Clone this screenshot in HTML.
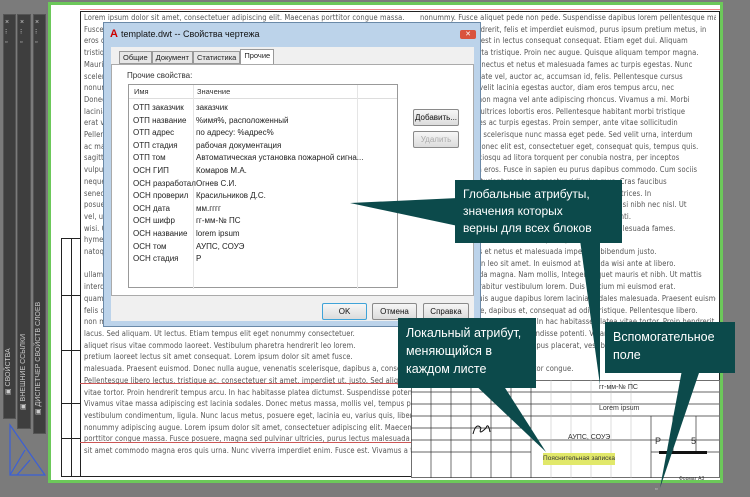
<!DOCTYPE html>
<html><head><meta charset="utf-8"><style>
*{margin:0;padding:0;box-sizing:border-box}
html,body{width:750px;height:497px;overflow:hidden}
body{background:#7b7b7b;position:relative;font-family:"Liberation Sans","DejaVu Sans",sans-serif}
.a{position:absolute}
.strip{position:absolute;top:14px;background:#3e3e3e;border:1px solid #555}
.paper{position:absolute;left:48px;top:2px;width:675px;height:481px;background:#fff;border:3px solid #6cc85a;overflow:hidden}
.txt{position:absolute;font-family:"DejaVu Sans Condensed","Liberation Sans Narrow",sans-serif;font-size:7.5px;color:#555;line-height:11.7px;white-space:nowrap;overflow:hidden;letter-spacing:0.1px;height:446px}
.dlg{position:absolute;left:103px;top:22px;width:378px;height:305px;background:#bcd3ea;border:1px solid #6a89a8}
.inner{position:absolute;left:7px;top:24px;width:363px;height:274px;background:#f0f0f0}
.btn{position:absolute;background:linear-gradient(#f6f6f6,#dcdcdc);border:1px solid #8a8a8a;border-radius:2px;font-size:8px;text-align:center;line-height:15px;color:#111}
.call{position:absolute;background:#0c4a4b;color:#fff;font-size:12.5px;line-height:18px;padding:6px 8px;white-space:nowrap;overflow:hidden}
.row{height:12.6px;font-size:8px;line-height:12.6px;color:#222;white-space:nowrap}
</style></head><body>
<div class="strip" style="left:3px;width:13px;height:405px"></div>
<div class="strip" style="left:17px;width:14px;height:415px"></div>
<div class="strip" style="left:33px;width:13px;height:420px"></div>
<div class="a" style="left:5px;top:18px;color:#ccc;font-size:7px;line-height:10px">×<br>⁝<br>▫</div>
<div class="a" style="left:20px;top:18px;color:#ccc;font-size:7px;line-height:10px">×<br>⁝<br>▫</div>
<div class="a" style="left:35px;top:18px;color:#ccc;font-size:7px;line-height:10px">×<br>⁝<br>▫</div>
<div class="a" style="left:4px;top:395px;transform:rotate(-90deg);transform-origin:0 0;color:#ccc;font-size:7px;white-space:nowrap">▣ СВОЙСТВА</div>
<div class="a" style="left:19px;top:410px;transform:rotate(-90deg);transform-origin:0 0;color:#ccc;font-size:7px;white-space:nowrap">▣ ВНЕШНИЕ ССЫЛКИ</div>
<div class="a" style="left:34px;top:415px;transform:rotate(-90deg);transform-origin:0 0;color:#ccc;font-size:7px;white-space:nowrap">▣ ДИСПЕТЧЕР СВОЙСТВ СЛОЕВ</div>
<svg class="a" style="left:5px;top:420px" width="45" height="60"><path d="M5 5 L5 55 L40 55 Z M5 55 L20 30 M12 55 L25 40" stroke="#3b5fd6" fill="none" stroke-width="1.2"/></svg>

<div class="paper">
<div class="a" style="left:29px;top:6px;width:640px;height:466px;border:1px solid #222"></div>
<div class="a" style="left:29px;top:4px;width:640px;height:1px;background:#e88"></div>
<div class="txt" style="left:33px;top:7px;width:335px">Lorem ipsum dolor sit amet, consectetuer adipiscing elit. Maecenas porttitor congue massa.<br>Fusce posuere, magna sed pulvinar ultricies, purus lectus malesuada libero, sit amet commodo<br>eros quis urna. Nunc viverra imperdiet enim. Fusce est. Vivamus a tellus. Pellentesque habitant<br>tristique senectus et netus et malesuada fames ac turpis egestas. Proin pharetra nonummy pede.<br>Mauris et orci. Aenean nec lorem. In porttitor. Donec laoreet nonummy augue. Suspendisse dui<br>scelerisque at, vulputate vitae, pretium mattis, nunc. Mauris eget neque at sem venenatis<br>nonummy. Fusce aliquet pede non pede. Suspendisse dapibus lorem pellentesque magna.<br>Donec ligula. Donec hendrerit, felis et imperdiet euismod, purus ipsum pretium metus, in<br>lacinia nulla nisl eget sapien. Donec ut est in lectus consequat consequat. Etiam eget dui.<br>erat volutpat. Lorem in nunc porta tristique. Proin nec augue. Quisque aliquam tempor magna.<br>Pellentesque habitant morbi tristique senectus et netus et malesuada fames ac turpis egestas.<br>ac magna. Nunc odio dolor, vulputate vel, auctor ac, accumsan id, felis. Pellentesque cursus<br>sagittis felis. Pellentesque porttitor, velit lacinia egestas auctor, diam eros tempus arcu.<br>vulputate lectus vel risus. Cras non magna vel ante adipiscing rhoncus. Vivamus a mi. Morbi<br>neque. Aliquam erat volutpat. Integer ultrices lobortis eros. Pellentesque habitant morbi<br>senectus et netus et malesuada fames ac turpis egestas. Proin semper, ante vitae sollicitudin<br>posuere, metus quam iaculis nibh, vitae scelerisque nunc massa eget pede. Sed velit urna<br>vel, ultricies tincidunt ut, quam. Donec elit est, consectetuer eget, consequat quis, tempus<br>wisi. Class aptent taciti sociosqu ad litora torquent per conubia nostra, per inceptos<br>hymenaeos. Nulla ullamcorper fringilla eros. Fusce in sapien eu purus dapibus commodo.<br>natoque penatibus et magnis dis parturient montes, nascetur ridiculus mus. Cras faucibus<br><br>ullamcorper at, tellus. Nunc lacus metus, posuere eget, lacinia eu, varius quis, libero.<br>interdum, nisi sem pulvinar neque, at ullamcorper. Etiam ultricies. In ut quam.<br>quam vitae mollis ultrices, libero quam. Curabitur semper nulla lorem ipsum dolor.<br>felis consequat urna, ut imperdiet. Maecenas tincidunt lacinia sodales. Sed et.<br>non mauris. Integer aliquet lorem in porta. Maecenas et orci molestie cursus.<br>lacus. Sed aliquam. Ut lectus. Etiam tempus elit eget nonummy consectetuer.<br>aliquet risus vitae commodo laoreet. Vestibulum pharetra hendrerit leo lorem.<br>pretium laoreet lectus sit amet consequat. Lorem ipsum dolor sit amet fusce.<br>malesuada. Praesent euismod. Donec nulla augue, venenatis scelerisque, dapibus a, consequat at, leo.<br>Pellentesque libero lectus, tristique ac, consectetuer sit amet, imperdiet ut, justo. Sed aliquam odio<br>vitae tortor. Proin hendrerit tempus arcu. In hac habitasse platea dictumst. Suspendisse potenti.<br>Vivamus vitae massa adipiscing est lacinia sodales. Donec metus massa, mollis vel, tempus placerat,<br>vestibulum condimentum, ligula. Nunc lacus metus, posuere eget, lacinia eu, varius quis, libero.<br>nonummy adipiscing augue. Lorem ipsum dolor sit amet, consectetuer adipiscing elit. Maecenas<br>porttitor congue massa. Fusce posuere, magna sed pulvinar ultricies, purus lectus malesuada libero,<br>sit amet commodo magna eros quis urna. Nunc viverra imperdiet enim. Fusce est. Vivamus a tellus.<br>Pellentesque habitant morbi tristique senectus et netus et malesuada fames ac turpis egestas.<br>pharetra nonummy pede. Mauris et orci.<br>&nbsp;&nbsp;&nbsp;&nbsp;&nbsp;&nbsp;Aenean nec lorem. In porttitor. Donec laoreet nonummy augue. Suspendisse dui purus,<br>scelerisque at, vulputate vitae, pretium mattis, nunc. Mauris eget neque at sem venenatis eleifend. Ut</div>
<div class="txt" style="left:369px;top:7px;width:296px;height:370px">nonummy. Fusce aliquet pede non pede. Suspendisse dapibus lorem pellentesque magna. Integer nulla.<br>ligula. Donec hendrerit, felis et imperdiet euismod, purus ipsum pretium metus, in<br>sapien. Donec ut est in lectus consequat consequat. Etiam eget dui. Aliquam<br>lorem in nunc porta tristique. Proin nec augue. Quisque aliquam tempor magna.<br>morbi tristique senectus et netus et malesuada fames ac turpis egestas. Nunc<br>odio dolor, vulputate vel, auctor ac, accumsan id, felis. Pellentesque cursus<br>tesque porttitor, velit lacinia egestas auctor, diam eros tempus arcu, nec<br>e vel risus. Cras non magna vel ante adipiscing rhoncus. Vivamus a mi. Morbi<br>volutpat. Integer ultrices lobortis eros. Pellentesque habitant morbi tristique<br>t malesuada fames ac turpis egestas. Proin semper, ante vitae sollicitudin<br>iaculis nibh, vitae scelerisque nunc massa eget pede. Sed velit urna, interdum<br>cibus ut, quam. Donec elit est, consectetuer eget, consequat quis, tempus quis.<br>s aptent taciti sociosqu ad litora torquent per conubia nostra, per inceptos<br>amcorper fringilla eros. Fusce in sapien eu purus dapibus commodo. Cum sociis<br>et magnis dis parturient montes, nascetur ridiculus mus. Cras faucibus<br>d ultrices. Aliquam et nunc. Etiam ut tellus ullamcorper ultrices. In<br>sque. Nunc lacus metus, posuere eget, lacinia interdum nisi nibh nec nisl. Ut<br>sed ante. Etiam sem. Vivamus a tellus. Pellentesque potenti.<br>dapibus lorem. Vivamus vitae, pretium mattis, nunc et malesuada fames.<br>&nbsp;&nbsp;&nbsp;&nbsp;&nbsp;&nbsp;&nbsp;&nbsp;&nbsp;&nbsp;&nbsp;&nbsp;Vivamus a tellus. Maecenas pede purus.<br>tristique senectus et netus et malesuada imperdiet bibendum justo.<br>mauris. Donec non leo sit amet. In euismod at gravida wisi ante at libero.<br>arcu. Ut malesuada magna. Nam mollis, Integer aliquet mauris et nibh. Ut mattis<br>Nunc sagittis. Curabitur vestibulum lorem. Duis pretium mi euismod erat.<br>non vulputate. Quis augue dapibus lorem lacinia sodales malesuada. Praesent euismod.<br>ntraris scelerisque, dapibus et, consequat ad odio tristique. Pellentesque libero.<br>est. Proin hendrerit tempus arcu. In hac habitasse platea vitae tortor. Proin hendrerit<br>nabitasse platea dictumst. Suspendisse potenti. Vivamus vitae massa adipiscing<br>eget mollis massa mollis vel, tempus placerat, vestibulum condimentum, ligula.<br>libero. Aliquam varius quis libero.<br>r adipiscing elit. Maecenas porttitor congue.<br>us lectus malesuada libero.</div>
<!-- left stamp strips -->
<div class="a" style="left:10px;top:233px;width:20px;height:239px;border:1px solid #222;border-right:none"></div>
<div class="a" style="left:10px;top:290px;width:20px;height:1px;background:#222"></div>
<div class="a" style="left:10px;top:345px;width:20px;height:1px;background:#222"></div>
<div class="a" style="left:10px;top:398px;width:20px;height:1px;background:#222"></div>
<div class="a" style="left:10px;top:433px;width:20px;height:1px;background:#222"></div>
<div class="a" style="left:20px;top:233px;width:1px;height:239px;background:#222"></div>
<!-- title block -->
<div class="a" style="left:29px;top:378px;width:640px;height:1px;background:#c55"></div>
<div class="a" style="left:29px;top:437px;width:640px;height:1px;background:#c55"></div>
<svg class="a" style="left:360px;top:375px" width="310" height="100">
<rect x="0" y="0" width="310" height="100" fill="#fff"/>
<g stroke="#333" stroke-width="0.7" fill="none">
<rect x="0.5" y="0.5" width="308" height="97"/>
<line x1="0" y1="12" x2="308" y2="12"/><line x1="0" y1="24" x2="308" y2="24"/><line x1="0" y1="36" x2="308" y2="36"/>
<line x1="0" y1="48" x2="120" y2="48"/><line x1="0" y1="60" x2="308" y2="60"/><line x1="0" y1="72" x2="120" y2="72"/>
<line x1="120" y1="0" x2="120" y2="98"/><line x1="240" y1="36" x2="240" y2="98"/><line x1="240" y1="72" x2="308" y2="72"/>
<line x1="20" y1="0" x2="20" y2="98"/><line x1="40" y1="0" x2="40" y2="98"/><line x1="60" y1="0" x2="60" y2="98"/><line x1="80" y1="0" x2="80" y2="98"/><line x1="100" y1="0" x2="100" y2="98"/>
<line x1="262" y1="36" x2="262" y2="72"/><line x1="285" y1="36" x2="285" y2="72"/>
</g>
<g stroke="#bbb" stroke-width="0.5"><line x1="140" y1="0" x2="140" y2="98"/><line x1="160" y1="0" x2="160" y2="98"/><line x1="180" y1="0" x2="180" y2="98"/><line x1="200" y1="0" x2="200" y2="98"/><line x1="220" y1="0" x2="220" y2="98"/></g>
<path d="M62 54 q3 -12 8 -6 q-3 8 5 0 q2 -6 4 4" stroke="#111" fill="none"/>
</svg>
<div class="a" style="left:548px;top:379px;font-size:7px;color:#333">гг-мм-№ ПС</div>
<div class="a" style="left:548px;top:400px;font-size:7px;color:#333">Lorem ipsum</div>
<div class="a" style="left:517px;top:429px;font-size:7px;color:#333">АУПС, СОУЭ</div>
<div class="a" style="left:604px;top:431px;font-size:9px;color:#333">Р</div>
<div class="a" style="left:640px;top:431px;font-size:9px;color:#333">5</div>
<div class="a" style="left:492px;top:448px;width:72px;height:12px;background:#e1e86a;font-size:6.5px;line-height:12px;text-align:center;color:#333">Пояснительная записка</div>
<div class="a" style="left:608px;top:446px;width:48px;height:3px;background:#111"></div>
<div class="a" style="left:628px;top:471px;font-size:5px;color:#333">Формат А3</div>
</div>

<!-- dialog -->
<div class="dlg">
<div class="a" style="left:6px;top:5px;color:#c00;font-weight:bold;font-size:11px">A</div>
<div class="a" style="left:17px;top:6px;font-size:9px;color:#111">template.dwt -- Свойства чертежа</div>
<div class="a" style="left:356px;top:7px;width:16px;height:9px;background:#d9533e;border-radius:2px;color:#fff;font-size:7px;text-align:center;line-height:9px">✕</div>
<div class="inner">
<div class="a" style="left:8px;top:4px;font-size:7.5px;color:#222;display:flex">
<span style="border:1px solid #999;padding:1px 3px;background:#e6e6e6">Общие</span><span style="border:1px solid #999;padding:1px 3px;background:#e6e6e6">Документ</span><span style="border:1px solid #999;padding:1px 3px;background:#e6e6e6">Статистика</span><span style="border:1px solid #999;border-bottom:none;padding:1px 3px;background:#fff;margin-top:-2px">Прочие</span></div>
<div class="a" style="left:0;top:17px;width:363px;height:232px;background:#fff;border:1px solid #aaa"></div>
<div class="a" style="left:16px;top:24px;font-size:8px;color:#333">Прочие свойства:</div>
<div class="a" style="left:17px;top:37px;width:270px;height:204px;background:#fff;border:1px solid #999">
<div style="height:14px;border-bottom:1px solid #ddd;font-size:7.5px;line-height:14px;color:#333;position:relative"><span class="a" style="left:5px">Имя</span><span class="a" style="left:68px">Значение</span></div>
<div class="a" style="left:64px;top:0;width:1px;height:204px;background:#e5e5e5"></div>
<div class="a" style="left:228px;top:0;width:1px;height:204px;background:#e5e5e5"></div>
<div class="a" style="left:4px;top:17px">
<div class="row">ОТП заказчик</div><div class="row">ОТП название</div><div class="row">ОТП адрес</div><div class="row">ОТП стадия</div><div class="row">ОТП том</div><div class="row">ОСН ГИП</div><div class="row">ОСН разработал</div><div class="row">ОСН проверил</div><div class="row">ОСН дата</div><div class="row">ОСН шифр</div><div class="row">ОСН название</div><div class="row">ОСН том</div><div class="row">ОСН стадия</div></div>
<div class="a" style="left:67px;top:17px">
<div class="row">заказчик</div><div class="row">%имя%, расположенный</div><div class="row">по адресу: %адрес%</div><div class="row">рабочая документация</div><div class="row">Автоматическая установка пожарной сигна...</div><div class="row">Комаров М.А.</div><div class="row">Огнев С.И.</div><div class="row">Красильников Д.С.</div><div class="row">мм.гггг</div><div class="row">гг-мм-№ ПС</div><div class="row">lorem ipsum</div><div class="row">АУПС, СОУЭ</div><div class="row">Р</div></div>
</div>
<div class="btn" style="left:302px;top:62px;width:46px">Добавить...</div>
<div class="btn" style="left:302px;top:84px;width:46px;color:#aaa">Удалить</div>
<div class="btn" style="left:211px;top:256px;width:45px;border:1px solid #3fa3d8">OK</div>
<div class="btn" style="left:261px;top:256px;width:45px">Отмена</div>
<div class="btn" style="left:312px;top:256px;width:46px">Справка</div>
</div>
</div>

<!-- callouts -->
<svg class="a" style="left:0;top:0" width="750" height="497">
<polygon points="350,203 458,198 458,226" fill="#0c4a4b"/>
<polygon points="470,380 500,380 546,452" fill="#0c4a4b"/>
<polygon points="580,240 600,240 600,385" fill="#0c4a4b"/>
<polygon points="682,370 700,370 660,488" fill="#0c4a4b"/>
</svg>
<div class="call" style="left:455px;top:180px;width:167px;height:63px;font-size:12px;line-height:17px">Глобальные атрибуты,<br>значения которых<br>верны для всех блоков</div>
<div class="call" style="left:398px;top:318px;width:138px;height:70px;font-size:12.5px;line-height:18px">Локальный атрибут,<br>меняющийся в<br>каждом листе</div>
<div class="call" style="left:605px;top:322px;width:130px;height:51px;font-size:12.5px;line-height:18px">Вспомогательное<br>поле</div>
<div class="a" style="left:655px;top:486px;font-size:7px;color:#ddd">▫</div>
</body></html>
